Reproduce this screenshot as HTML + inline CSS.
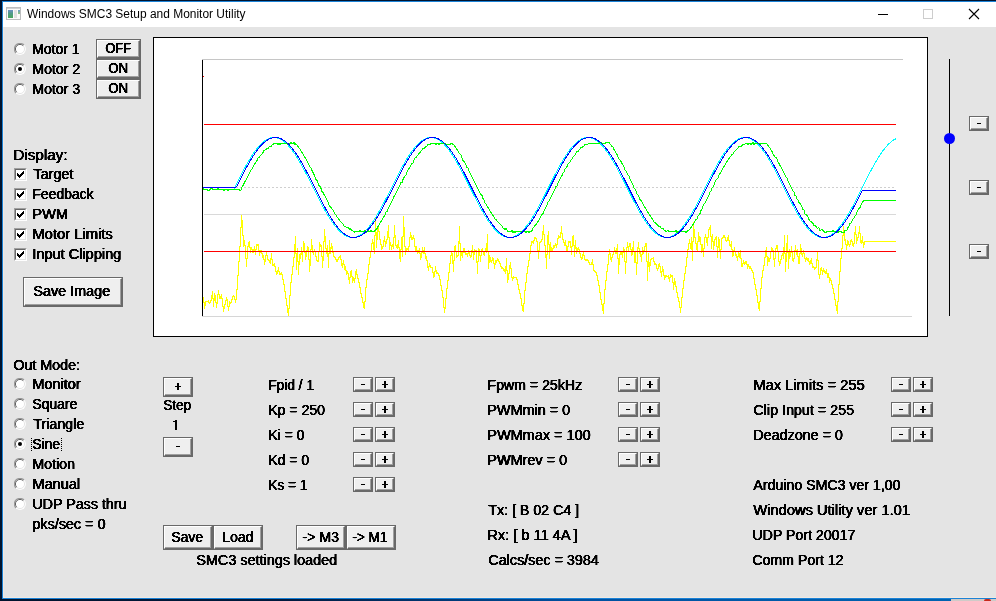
<!DOCTYPE html><html><head><meta charset="utf-8"><title>Windows SMC3 Setup and Monitor Utility</title><style>
html,body{margin:0;padding:0}
body{width:996px;height:601px;overflow:hidden;position:relative;background:#e4e4e4;font-family:'Liberation Sans', sans-serif;}
.a{position:absolute}
.t{position:absolute;white-space:pre;font:normal 14px/16px 'Liberation Sans', sans-serif;color:#000;transform-origin:0 0;text-shadow:0.75px 0 0 #000;filter:url(#th);}
.b{position:absolute;box-sizing:border-box;background:#efefef;border:1px solid #696969;}
.b:before{content:"";position:absolute;left:0;top:0;right:0;bottom:0;border-top:1px solid #fff;border-left:1px solid #fff;border-right:1px solid #696969;border-bottom:1px solid #696969;}
.b:after{content:"";position:absolute;left:1px;top:1px;right:1px;bottom:1px;border-right:1px solid #a0a0a0;border-bottom:1px solid #a0a0a0;}
.r{position:absolute;width:12px;height:12px;}
.c{position:absolute;width:13px;height:13px;box-sizing:border-box;background:#fff;border:1px solid;border-color:#a0a0a0 #fff #fff #a0a0a0;}
.c:before{content:"";position:absolute;left:0;top:0;right:0;bottom:0;border:1px solid;border-color:#696969 #e3e3e3 #e3e3e3 #696969;}
.m{position:absolute;background:#000;width:4px;height:1px}
.pv{position:absolute;background:#000;width:2px;height:7px}
.ph{position:absolute;background:#000;width:6px;height:1px}

</style></head><body>
<svg width="0" height="0" style="position:absolute"><filter id="th" x="-5%" y="-10%" width="110%" height="120%" color-interpolation-filters="sRGB"><feComponentTransfer><feFuncA type="linear" slope="2.4" intercept="-0.6"/></feComponentTransfer></filter></svg>
<div class="a" style="left:0;top:0;width:996px;height:27px;background:#fff"></div>
<div class="a" style="left:0;top:0;width:996px;height:1px;background:#00132e"></div>
<div class="a" style="left:0;top:1px;width:996px;height:1px;background:#1b82d6"></div>
<div class="a" style="left:3px;top:27px;width:1px;height:571px;background:#f0e9e2"></div>
<div class="a" style="left:3px;top:597px;width:993px;height:1px;background:#f0e9e2"></div>
<div class="a" style="left:0;top:0;width:2px;height:601px;background:#00132e"></div>
<div class="a" style="left:2px;top:1px;width:1px;height:598px;background:#1b82d6"></div>
<div class="a" style="left:2px;top:598px;width:994px;height:1px;background:#1b82d6"></div>
<div class="a" style="left:0;top:599px;width:951px;height:2px;background:linear-gradient(90deg,#00132e 0%,#001a3e 30%,#0050a0 60%,#0063b1 100%)"></div>
<div class="a" style="left:951px;top:599px;width:45px;height:2px;background:#cfcbc8"></div>
<div class="a" style="left:984px;top:599px;width:7px;height:2px;background:#c8281c;border-radius:3px 3px 0 0"></div>
<svg class="a" style="left:6px;top:7px" width="15" height="13" viewBox="0 0 15 13"><defs><linearGradient id="ig1" x1="0" y1="0" x2="0" y2="1"><stop offset="0" stop-color="#6c8fc4"/><stop offset=".45" stop-color="#4f9a86"/><stop offset="1" stop-color="#4aa85c"/></linearGradient><linearGradient id="ig2" x1="0" y1="0" x2="0" y2="1"><stop offset="0" stop-color="#6f9bd0"/><stop offset="1" stop-color="#8cc878"/></linearGradient></defs><rect x="0.5" y="0.5" width="14" height="12" fill="#fbfbfb" stroke="#bcbec0"/><rect x="1" y="1" width="13" height="1" fill="#cfd1d3"/><rect x="2" y="3" width="5" height="8" fill="url(#ig1)"/><rect x="8" y="3" width="3" height="8" fill="#e2e2e2"/><rect x="12" y="3" width="2" height="4" fill="url(#ig2)"/></svg>
<div class="a" style="left:878px;top:14px;width:10px;height:1px;background:#000"></div>
<div class="a" style="left:923px;top:9px;width:10px;height:10px;box-sizing:border-box;border:1px solid #cdcdcd"></div>
<svg class="a" style="left:968px;top:8px" width="12" height="12" viewBox="0 0 12 12"><path d="M1 1L11 11M11 1L1 11" stroke="#000" stroke-width="1.1" fill="none"/></svg>
<div class="b" style="left:96px;top:39px;width:45px;height:20px"></div>
<div class="b" style="left:96px;top:59px;width:45px;height:20px"></div>
<div class="b" style="left:96px;top:79px;width:45px;height:20px"></div>
<div class="b" style="left:23px;top:277px;width:100px;height:30px"></div>
<div class="b" style="left:163px;top:377px;width:30px;height:20px"></div>
<div class="b" style="left:163px;top:437px;width:30px;height:20px"></div>
<div class="b" style="left:163px;top:525px;width:50px;height:25px"></div>
<div class="b" style="left:213px;top:525px;width:50px;height:25px"></div>
<div class="b" style="left:296px;top:525px;width:50px;height:25px"></div>
<div class="b" style="left:346px;top:525px;width:50px;height:25px"></div>
<div class="b" style="left:353px;top:377px;width:20px;height:15px"></div>
<div class="m" style="left:361px;top:384px"></div>
<div class="b" style="left:375px;top:377px;width:20px;height:15px"></div>
<div class="pv" style="left:384px;top:381px"></div><div class="ph" style="left:382px;top:384px"></div>
<div class="b" style="left:353px;top:402px;width:20px;height:15px"></div>
<div class="m" style="left:361px;top:409px"></div>
<div class="b" style="left:375px;top:402px;width:20px;height:15px"></div>
<div class="pv" style="left:384px;top:406px"></div><div class="ph" style="left:382px;top:409px"></div>
<div class="b" style="left:353px;top:427px;width:20px;height:15px"></div>
<div class="m" style="left:361px;top:434px"></div>
<div class="b" style="left:375px;top:427px;width:20px;height:15px"></div>
<div class="pv" style="left:384px;top:431px"></div><div class="ph" style="left:382px;top:434px"></div>
<div class="b" style="left:353px;top:452px;width:20px;height:15px"></div>
<div class="m" style="left:361px;top:459px"></div>
<div class="b" style="left:375px;top:452px;width:20px;height:15px"></div>
<div class="pv" style="left:384px;top:456px"></div><div class="ph" style="left:382px;top:459px"></div>
<div class="b" style="left:353px;top:477px;width:20px;height:15px"></div>
<div class="m" style="left:361px;top:484px"></div>
<div class="b" style="left:375px;top:477px;width:20px;height:15px"></div>
<div class="pv" style="left:384px;top:481px"></div><div class="ph" style="left:382px;top:484px"></div>
<div class="b" style="left:618px;top:377px;width:20px;height:15px"></div>
<div class="m" style="left:626px;top:384px"></div>
<div class="b" style="left:640px;top:377px;width:20px;height:15px"></div>
<div class="pv" style="left:649px;top:381px"></div><div class="ph" style="left:647px;top:384px"></div>
<div class="b" style="left:618px;top:402px;width:20px;height:15px"></div>
<div class="m" style="left:626px;top:409px"></div>
<div class="b" style="left:640px;top:402px;width:20px;height:15px"></div>
<div class="pv" style="left:649px;top:406px"></div><div class="ph" style="left:647px;top:409px"></div>
<div class="b" style="left:618px;top:427px;width:20px;height:15px"></div>
<div class="m" style="left:626px;top:434px"></div>
<div class="b" style="left:640px;top:427px;width:20px;height:15px"></div>
<div class="pv" style="left:649px;top:431px"></div><div class="ph" style="left:647px;top:434px"></div>
<div class="b" style="left:618px;top:452px;width:20px;height:15px"></div>
<div class="m" style="left:626px;top:459px"></div>
<div class="b" style="left:640px;top:452px;width:20px;height:15px"></div>
<div class="pv" style="left:649px;top:456px"></div><div class="ph" style="left:647px;top:459px"></div>
<div class="b" style="left:891px;top:377px;width:20px;height:15px"></div>
<div class="m" style="left:899px;top:384px"></div>
<div class="b" style="left:913px;top:377px;width:20px;height:15px"></div>
<div class="pv" style="left:922px;top:381px"></div><div class="ph" style="left:920px;top:384px"></div>
<div class="b" style="left:891px;top:402px;width:20px;height:15px"></div>
<div class="m" style="left:899px;top:409px"></div>
<div class="b" style="left:913px;top:402px;width:20px;height:15px"></div>
<div class="pv" style="left:922px;top:406px"></div><div class="ph" style="left:920px;top:409px"></div>
<div class="b" style="left:891px;top:427px;width:20px;height:15px"></div>
<div class="m" style="left:899px;top:434px"></div>
<div class="b" style="left:913px;top:427px;width:20px;height:15px"></div>
<div class="pv" style="left:922px;top:431px"></div><div class="ph" style="left:920px;top:434px"></div>
<div class="b" style="left:969px;top:116px;width:20px;height:15px"></div>
<div class="m" style="left:977px;top:123px"></div>
<div class="b" style="left:969px;top:180px;width:20px;height:15px"></div>
<div class="m" style="left:977px;top:187px"></div>
<div class="b" style="left:969px;top:244px;width:20px;height:15px"></div>
<div class="m" style="left:977px;top:251px"></div>
<div class="pv" style="left:177px;top:383px"></div><div class="ph" style="left:175px;top:386px"></div>
<div class="m" style="left:176px;top:446px"></div>
<svg class="r" style="left:14px;top:43px" viewBox="0 0 12 12"><circle cx="6" cy="6" r="5.9" fill="#fff"/><path d="M2.0 10.0A5.4 5.4 0 0 1 10.0 2.0" stroke="#9a9a9a" stroke-width="1.1" fill="none"/><path d="M2.75 9.25A4.5 4.5 0 0 1 9.25 2.75" stroke="#636363" stroke-width="1" fill="none"/><path d="M9.25 2.75A4.5 4.5 0 0 1 2.75 9.25" stroke="#e6e6e6" stroke-width="1" fill="none"/></svg>
<svg class="r" style="left:14px;top:63px" viewBox="0 0 12 12"><circle cx="6" cy="6" r="5.9" fill="#fff"/><path d="M2.0 10.0A5.4 5.4 0 0 1 10.0 2.0" stroke="#9a9a9a" stroke-width="1.1" fill="none"/><path d="M2.75 9.25A4.5 4.5 0 0 1 9.25 2.75" stroke="#636363" stroke-width="1" fill="none"/><path d="M9.25 2.75A4.5 4.5 0 0 1 2.75 9.25" stroke="#e6e6e6" stroke-width="1" fill="none"/><circle cx="6" cy="6" r="2" fill="#000"/></svg>
<svg class="r" style="left:14px;top:83px" viewBox="0 0 12 12"><circle cx="6" cy="6" r="5.9" fill="#fff"/><path d="M2.0 10.0A5.4 5.4 0 0 1 10.0 2.0" stroke="#9a9a9a" stroke-width="1.1" fill="none"/><path d="M2.75 9.25A4.5 4.5 0 0 1 9.25 2.75" stroke="#636363" stroke-width="1" fill="none"/><path d="M9.25 2.75A4.5 4.5 0 0 1 2.75 9.25" stroke="#e6e6e6" stroke-width="1" fill="none"/></svg>
<svg class="r" style="left:14px;top:378px" viewBox="0 0 12 12"><circle cx="6" cy="6" r="5.9" fill="#fff"/><path d="M2.0 10.0A5.4 5.4 0 0 1 10.0 2.0" stroke="#9a9a9a" stroke-width="1.1" fill="none"/><path d="M2.75 9.25A4.5 4.5 0 0 1 9.25 2.75" stroke="#636363" stroke-width="1" fill="none"/><path d="M9.25 2.75A4.5 4.5 0 0 1 2.75 9.25" stroke="#e6e6e6" stroke-width="1" fill="none"/></svg>
<svg class="r" style="left:14px;top:398px" viewBox="0 0 12 12"><circle cx="6" cy="6" r="5.9" fill="#fff"/><path d="M2.0 10.0A5.4 5.4 0 0 1 10.0 2.0" stroke="#9a9a9a" stroke-width="1.1" fill="none"/><path d="M2.75 9.25A4.5 4.5 0 0 1 9.25 2.75" stroke="#636363" stroke-width="1" fill="none"/><path d="M9.25 2.75A4.5 4.5 0 0 1 2.75 9.25" stroke="#e6e6e6" stroke-width="1" fill="none"/></svg>
<svg class="r" style="left:14px;top:418px" viewBox="0 0 12 12"><circle cx="6" cy="6" r="5.9" fill="#fff"/><path d="M2.0 10.0A5.4 5.4 0 0 1 10.0 2.0" stroke="#9a9a9a" stroke-width="1.1" fill="none"/><path d="M2.75 9.25A4.5 4.5 0 0 1 9.25 2.75" stroke="#636363" stroke-width="1" fill="none"/><path d="M9.25 2.75A4.5 4.5 0 0 1 2.75 9.25" stroke="#e6e6e6" stroke-width="1" fill="none"/></svg>
<svg class="r" style="left:14px;top:438px" viewBox="0 0 12 12"><circle cx="6" cy="6" r="5.9" fill="#fff"/><path d="M2.0 10.0A5.4 5.4 0 0 1 10.0 2.0" stroke="#9a9a9a" stroke-width="1.1" fill="none"/><path d="M2.75 9.25A4.5 4.5 0 0 1 9.25 2.75" stroke="#636363" stroke-width="1" fill="none"/><path d="M9.25 2.75A4.5 4.5 0 0 1 2.75 9.25" stroke="#e6e6e6" stroke-width="1" fill="none"/><circle cx="6" cy="6" r="2" fill="#000"/></svg>
<svg class="r" style="left:14px;top:458px" viewBox="0 0 12 12"><circle cx="6" cy="6" r="5.9" fill="#fff"/><path d="M2.0 10.0A5.4 5.4 0 0 1 10.0 2.0" stroke="#9a9a9a" stroke-width="1.1" fill="none"/><path d="M2.75 9.25A4.5 4.5 0 0 1 9.25 2.75" stroke="#636363" stroke-width="1" fill="none"/><path d="M9.25 2.75A4.5 4.5 0 0 1 2.75 9.25" stroke="#e6e6e6" stroke-width="1" fill="none"/></svg>
<svg class="r" style="left:14px;top:478px" viewBox="0 0 12 12"><circle cx="6" cy="6" r="5.9" fill="#fff"/><path d="M2.0 10.0A5.4 5.4 0 0 1 10.0 2.0" stroke="#9a9a9a" stroke-width="1.1" fill="none"/><path d="M2.75 9.25A4.5 4.5 0 0 1 9.25 2.75" stroke="#636363" stroke-width="1" fill="none"/><path d="M9.25 2.75A4.5 4.5 0 0 1 2.75 9.25" stroke="#e6e6e6" stroke-width="1" fill="none"/></svg>
<svg class="r" style="left:14px;top:498px" viewBox="0 0 12 12"><circle cx="6" cy="6" r="5.9" fill="#fff"/><path d="M2.0 10.0A5.4 5.4 0 0 1 10.0 2.0" stroke="#9a9a9a" stroke-width="1.1" fill="none"/><path d="M2.75 9.25A4.5 4.5 0 0 1 9.25 2.75" stroke="#636363" stroke-width="1" fill="none"/><path d="M9.25 2.75A4.5 4.5 0 0 1 2.75 9.25" stroke="#e6e6e6" stroke-width="1" fill="none"/></svg>
<div class="c" style="left:14px;top:168px"></div>
<svg class="a" style="left:17px;top:171px" width="7" height="7" viewBox="0 0 7 7" shape-rendering="crispEdges"><path d="M0 2h1v3h-1zM1 3h1v3h-1zM2 4h1v3h-1zM3 3h1v3h-1zM4 2h1v3h-1zM5 1h1v3h-1zM6 0h1v3h-1z" fill="#000"/></svg>
<div class="c" style="left:14px;top:188px"></div>
<svg class="a" style="left:17px;top:191px" width="7" height="7" viewBox="0 0 7 7" shape-rendering="crispEdges"><path d="M0 2h1v3h-1zM1 3h1v3h-1zM2 4h1v3h-1zM3 3h1v3h-1zM4 2h1v3h-1zM5 1h1v3h-1zM6 0h1v3h-1z" fill="#000"/></svg>
<div class="c" style="left:14px;top:208px"></div>
<svg class="a" style="left:17px;top:211px" width="7" height="7" viewBox="0 0 7 7" shape-rendering="crispEdges"><path d="M0 2h1v3h-1zM1 3h1v3h-1zM2 4h1v3h-1zM3 3h1v3h-1zM4 2h1v3h-1zM5 1h1v3h-1zM6 0h1v3h-1z" fill="#000"/></svg>
<div class="c" style="left:14px;top:228px"></div>
<svg class="a" style="left:17px;top:231px" width="7" height="7" viewBox="0 0 7 7" shape-rendering="crispEdges"><path d="M0 2h1v3h-1zM1 3h1v3h-1zM2 4h1v3h-1zM3 3h1v3h-1zM4 2h1v3h-1zM5 1h1v3h-1zM6 0h1v3h-1z" fill="#000"/></svg>
<div class="c" style="left:14px;top:248px"></div>
<svg class="a" style="left:17px;top:251px" width="7" height="7" viewBox="0 0 7 7" shape-rendering="crispEdges"><path d="M0 2h1v3h-1zM1 3h1v3h-1zM2 4h1v3h-1zM3 3h1v3h-1zM4 2h1v3h-1zM5 1h1v3h-1zM6 0h1v3h-1z" fill="#000"/></svg>
<div class="a" style="left:31px;top:438px;width:1px;height:13px;background:repeating-linear-gradient(180deg,#000 0 1px,transparent 1px 2px)"></div><div class="a" style="left:61px;top:438px;width:1px;height:13px;background:repeating-linear-gradient(180deg,#000 0 1px,transparent 1px 2px)"></div>
<span class="t" style="left:31.81px;top:41px;transform:scaleX(0.9925)">Motor 1</span>
<span class="t" style="left:31.79px;top:61px;transform:scaleX(1.0053)">Motor 2</span>
<span class="t" style="left:31.79px;top:81px;transform:scaleX(1.0053)">Motor 3</span>
<span class="t" style="left:12.61px;top:147px;transform:scaleX(1.0872)">Display:</span>
<span class="t" style="left:33.40px;top:166px;transform:scaleX(1.0264)">Target</span>
<span class="t" style="left:32.40px;top:186px;transform:scaleX(0.9976)">Feedback</span>
<span class="t" style="left:32.36px;top:206px;transform:scaleX(1.0412)">PWM</span>
<span class="t" style="left:32.35px;top:226px;transform:scaleX(1.0548)">Motor Limits</span>
<span class="t" style="left:32.36px;top:246px;transform:scaleX(1.0383)">Input Clipping</span>
<span class="t" style="left:12.66px;top:357px;transform:scaleX(1.0185)">Out Mode:</span>
<span class="t" style="left:31.77px;top:376px;transform:scaleX(1.0332)">Monitor</span>
<span class="t" style="left:31.80px;top:396px;transform:scaleX(0.9966)">Square</span>
<span class="t" style="left:32.80px;top:416px;transform:scaleX(1.0148)">Triangle</span>
<span class="t" style="left:31.81px;top:436px;transform:scaleX(0.9874)">Sine</span>
<span class="t" style="left:31.78px;top:456px;transform:scaleX(1.0156)">Motion</span>
<span class="t" style="left:31.76px;top:476px;transform:scaleX(1.0413)">Manual</span>
<span class="t" style="left:31.78px;top:496px;transform:scaleX(1.0202)">UDP Pass thru</span>
<span class="t" style="left:32.37px;top:516px;transform:scaleX(1.0277)">pks/sec = 0</span>
<span class="t" style="left:162.84px;top:397px;transform:scaleX(0.9615)">Step</span>
<div class="a" style="left:175px;top:420px;width:2px;height:10px;background:#000"></div><div class="a" style="left:173px;top:421px;width:2px;height:1px;background:#000"></div>
<span class="t" style="left:267.52px;top:377px;transform:scaleX(0.9754)">Fpid / 1</span>
<span class="t" style="left:267.50px;top:402px;transform:scaleX(1.0027)">Kp = 250</span>
<span class="t" style="left:267.50px;top:427px;transform:scaleX(0.9986)">Ki = 0</span>
<span class="t" style="left:267.50px;top:452px;transform:scaleX(0.9967)">Kd = 0</span>
<span class="t" style="left:267.53px;top:477px;transform:scaleX(0.9736)">Ks = 1</span>
<span class="t" style="left:195.77px;top:552px;transform:scaleX(1.0282)">SMC3 settings loaded</span>
<span class="t" style="left:487.39px;top:377px;transform:scaleX(1.0113)">Fpwm = 25kHz</span>
<span class="t" style="left:487.37px;top:402px;transform:scaleX(1.0282)">PWMmin = 0</span>
<span class="t" style="left:487.37px;top:427px;transform:scaleX(1.0327)">PWMmax = 100</span>
<span class="t" style="left:487.37px;top:452px;transform:scaleX(1.0306)">PWMrev = 0</span>
<span class="t" style="left:488.40px;top:502px;transform:scaleX(1.0140)">Tx: [ B 02 C4 ]</span>
<span class="t" style="left:487.36px;top:527px;transform:scaleX(1.0402)">Rx: [ b 11 4A ]</span>
<span class="t" style="left:488.40px;top:552px;transform:scaleX(1.0245)">Calcs/sec = 3984</span>
<span class="t" style="left:752.65px;top:377px;transform:scaleX(1.0478)">Max Limits = 255</span>
<span class="t" style="left:752.66px;top:402px;transform:scaleX(1.0229)">Clip Input = 255</span>
<span class="t" style="left:752.68px;top:427px;transform:scaleX(1.0225)">Deadzone = 0</span>
<span class="t" style="left:753.30px;top:477px;transform:scaleX(1.0106)">Arduino SMC3 ver 1,00</span>
<span class="t" style="left:753.30px;top:502px;transform:scaleX(1.0484)">Windows Utility ver 1.01</span>
<span class="t" style="left:752.29px;top:527px;transform:scaleX(1.0124)">UDP Port 20017</span>
<span class="t" style="left:752.18px;top:552px;transform:scaleX(1.0096)">Comm Port 12</span>
<span class="t" style="left:104.84px;top:40px;transform:scaleX(0.9203)">OFF</span>
<span class="t" style="left:108.20px;top:60px;transform:scaleX(0.9363)">ON</span>
<span class="t" style="left:108.20px;top:80px;transform:scaleX(0.9363)">ON</span>
<span class="t" style="left:33.47px;top:283px;transform:scaleX(1.0290)">Save Image</span>
<span class="t" style="left:170.70px;top:529px;transform:scaleX(0.9953)">Save</span>
<span class="t" style="left:221.60px;top:529px;transform:scaleX(0.9951)">Load</span>
<span class="t" style="left:301.80px;top:529px;transform:scaleX(1.0103)">-&gt; M3</span>
<span class="t" style="left:351.80px;top:529px;transform:scaleX(0.9669)">-&gt; M1</span>
<span class="a" style="left:27.40px;top:7.3px;white-space:pre;font:normal 12px/14px 'Liberation Sans', sans-serif;color:#000;transform-origin:0 0;transform:scaleX(0.9962)">Windows SMC3 Setup and Monitor Utility</span>
<div class="a" style="left:949px;top:59px;width:1px;height:257px;background:#000"></div>
<div class="a" style="left:943.75px;top:132.75px;width:11.5px;height:11.5px;border-radius:50%;background:#0000ff"></div>
<svg class="a" style="left:153px;top:37px" width="775" height="300" viewBox="153 37 775 300"><rect x="153.5" y="37.5" width="774" height="299" fill="#fff" stroke="#000" stroke-width="1"/><g shape-rendering="crispEdges" fill="none" stroke-width="1"><path d="M202 59.5H903" stroke="#c6c6c6"/><path d="M202 316.5H912" stroke="#d6d6d6"/><path d="M204 214.5H896" stroke="#d9d9d9"/><path d="M204 187.5H896" stroke="#cfcfcf" stroke-dasharray="2 2"/><path d="M202.5 60V316" stroke="#000"/><path d="M203 76.5H204M203 299.5H204" stroke="#f00"/></g><path shape-rendering="crispEdges" fill="none" stroke="#ffff00" stroke-width="1" d="M203.5 297V303M204.5 302V309M205.5 301V306M206.5 301V302M207.5 301V302M208.5 300V303M209.5 302V304M210.5 300V303M211.5 295V301M212.5 291V299M213.5 298V307M214.5 293V301M215.5 295V303M216.5 302V308M217.5 294V304M218.5 290V295M219.5 294V299M220.5 296V299M221.5 294V299M222.5 298V307M223.5 306V312M224.5 304V309M225.5 300V305M226.5 297V301M227.5 299V307M228.5 306V311M229.5 301V307M230.5 302V304M231.5 299V303M232.5 296V300M233.5 295V297M234.5 296V300M235.5 299V303M236.5 289V300M237.5 275V290M238.5 261V276M239.5 246V262M240.5 227V247M241.5 215V228M242.5 220V236M243.5 235V247M244.5 240V246M245.5 245V259M246.5 258V267M247.5 246V259M248.5 242V247M249.5 241V248M250.5 247V253M251.5 247V250M252.5 249V253M253.5 249V253M254.5 246V251M255.5 249V255M256.5 244V250M257.5 244V246M258.5 244V251M259.5 250V256M260.5 250V253M261.5 250V254M262.5 253V258M263.5 255V260M264.5 259V265M265.5 255V262M266.5 252V256M267.5 255V260M268.5 259V261M269.5 260V263M270.5 258V264M271.5 253V260M272.5 259V266M273.5 264V266M274.5 263V267M275.5 266V272M276.5 271V275M277.5 270V274M278.5 267V272M279.5 271V275M280.5 273V275M281.5 272V275M282.5 274V280M283.5 279V285M284.5 284V292M285.5 291V299M286.5 298V306M287.5 305V313M288.5 308V316M289.5 295V309M290.5 282V296M291.5 274V283M292.5 266V275M293.5 257V267M294.5 244V258M295.5 236V254M296.5 253V270M297.5 248V262M298.5 261V275M299.5 254V265M300.5 253V259M301.5 247V255M302.5 251V262M303.5 241V252M304.5 243V253M305.5 252V260M306.5 250V257M307.5 246V251M308.5 247V260M309.5 259V272M310.5 249V266M311.5 239V250M312.5 245V253M313.5 251V255M314.5 249V252M315.5 251V257M316.5 256V261M317.5 260V262M318.5 251V262M319.5 242V252M320.5 244V247M321.5 245V257M322.5 256V268M323.5 241V261M324.5 229V242M325.5 236V249M326.5 248V254M327.5 245V257M328.5 253V268M329.5 240V254M330.5 247V254M331.5 243V249M332.5 246V253M333.5 252V257M334.5 256V258M335.5 257V260M336.5 259V262M337.5 259V262M338.5 257V260M339.5 256V258M340.5 255V260M341.5 259V266M342.5 263V268M343.5 260V265M344.5 264V270M345.5 266V271M346.5 270V275M347.5 271V274M348.5 273V280M349.5 277V284M350.5 271V278M351.5 270V277M352.5 276V283M353.5 277V281M354.5 278V283M355.5 271V279M356.5 269V275M357.5 274V279M358.5 278V283M359.5 282V288M360.5 287V294M361.5 293V298M362.5 297V303M363.5 302V308M364.5 301V309M365.5 287V302M366.5 279V288M367.5 273V280M368.5 264V274M369.5 257V265M370.5 251V258M371.5 243V252M372.5 239V244M373.5 242V250M374.5 235V254M375.5 217V236M376.5 232V248M377.5 228V240M378.5 225V232M379.5 231V240M380.5 239V245M381.5 244V250M382.5 246V249M383.5 240V247M384.5 236V242M385.5 241V247M386.5 239V244M387.5 231V240M388.5 225V238M389.5 237V250M390.5 242V246M391.5 245V250M392.5 244V247M393.5 237V249M394.5 225V238M395.5 235V246M396.5 245V248M397.5 244V249M398.5 240V248M399.5 247V259M400.5 249V262M401.5 237V250M402.5 236V257M403.5 216V237M404.5 227V247M405.5 246V255M406.5 248V252M407.5 248V250M408.5 246V252M409.5 237V247M410.5 232V238M411.5 235V240M412.5 237V240M413.5 235V239M414.5 238V247M415.5 246V252M416.5 246V251M417.5 250V254M418.5 250V253M419.5 248V254M420.5 253V260M421.5 252V258M422.5 247V253M423.5 250V254M424.5 247V254M425.5 253V259M426.5 256V261M427.5 260V268M428.5 266V271M429.5 263V267M430.5 265V268M431.5 267V268M432.5 267V273M433.5 272V278M434.5 271V277M435.5 266V272M436.5 270V274M437.5 272V274M438.5 273V276M439.5 275V280M440.5 279V286M441.5 285V291M442.5 290V298M443.5 297V308M444.5 307V313M445.5 298V309M446.5 288V299M447.5 280V289M448.5 272V281M449.5 263V273M450.5 255V264M451.5 251V256M452.5 253V264M453.5 260V272M454.5 246V261M455.5 245V252M456.5 251V258M457.5 255V257M458.5 241V256M459.5 226V244M460.5 243V261M461.5 251V256M462.5 252V258M463.5 248V253M464.5 248V253M465.5 252V255M466.5 253V255M467.5 253V257M468.5 250V254M469.5 252V256M470.5 255V258M471.5 250V257M472.5 245V253M473.5 252V260M474.5 249V255M475.5 250V251M476.5 250V263M477.5 261V274M478.5 248V262M479.5 249V256M480.5 255V262M481.5 249V256M482.5 248V252M483.5 251V255M484.5 251V256M485.5 248V252M486.5 243V253M487.5 234V252M488.5 251V269M489.5 255V263M490.5 257V262M491.5 260V263M492.5 257V261M493.5 258V264M494.5 263V269M495.5 260V265M496.5 260V263M497.5 258V261M498.5 259V262M499.5 261V264M500.5 263V267M501.5 266V269M502.5 267V269M503.5 268V271M504.5 269V272M505.5 266V274M506.5 258V271M507.5 270V283M508.5 273V280M509.5 265V274M510.5 262V269M511.5 268V278M512.5 277V281M513.5 276V279M514.5 277V278M515.5 277V278M516.5 277V280M517.5 279V285M518.5 284V290M519.5 289V294M520.5 293V299M521.5 298V306M522.5 305V311M523.5 303V312M524.5 290V304M525.5 282V291M526.5 273V283M527.5 266V274M528.5 260V267M529.5 253V261M530.5 245V254M531.5 241V246M532.5 241V243M533.5 240V244M534.5 237V241M535.5 237V239M536.5 238V242M537.5 241V252M538.5 250V259M539.5 242V251M540.5 241V243M541.5 239V242M542.5 231V240M543.5 225V235M544.5 234V246M545.5 245V258M546.5 254V269M547.5 235V255M548.5 231V245M549.5 244V259M550.5 242V251M551.5 247V252M552.5 248V252M553.5 245V249M554.5 245V248M555.5 243V246M556.5 244V248M557.5 238V245M558.5 235V239M559.5 236V238M560.5 232V238M561.5 226V234M562.5 233V240M563.5 239V243M564.5 242V246M565.5 240V246M566.5 245V251M567.5 246V251M568.5 241V247M569.5 241V243M570.5 241V248M571.5 246V255M572.5 236V247M573.5 235V246M574.5 245V257M575.5 240V249M576.5 247V254M577.5 248V252M578.5 247V250M579.5 249V254M580.5 253V258M581.5 257V260M582.5 254V259M583.5 252V256M584.5 255V260M585.5 259V261M586.5 259V261M587.5 259V261M588.5 260V263M589.5 262V265M590.5 264V265M591.5 262V265M592.5 259V265M593.5 264V271M594.5 270V272M595.5 271V273M596.5 272V276M597.5 275V281M598.5 280V286M599.5 285V293M600.5 292V300M601.5 299V305M602.5 304V311M603.5 303V314M604.5 289V304M605.5 280V290M606.5 271V281M607.5 264V272M608.5 254V265M609.5 249V255M610.5 253V260M611.5 257V262M612.5 254V258M613.5 251V255M614.5 247V252M615.5 250V254M616.5 248V254M617.5 244V259M618.5 258V274M619.5 254V265M620.5 252V255M621.5 251V255M622.5 252V258M623.5 247V253M624.5 249V262M625.5 261V274M626.5 247V263M627.5 242V248M628.5 246V251M629.5 243V247M630.5 243V250M631.5 249V256M632.5 247V255M633.5 241V252M634.5 251V263M635.5 251V263M636.5 262V275M637.5 247V264M638.5 242V249M639.5 248V254M640.5 251V257M641.5 254V262M642.5 247V255M643.5 250V254M644.5 246V252M645.5 243V247M646.5 243V262M647.5 261V281M648.5 253V267M649.5 262V272M650.5 259V266M651.5 258V260M652.5 258V259M653.5 257V262M654.5 261V265M655.5 263V265M656.5 264V269M657.5 268V271M658.5 264V269M659.5 263V267M660.5 266V273M661.5 271V277M662.5 266V272M663.5 269V276M664.5 275V280M665.5 275V278M666.5 275V277M667.5 276V277M668.5 275V279M669.5 277V282M670.5 274V278M671.5 275V277M672.5 275V283M673.5 282V290M674.5 278V285M675.5 281V287M676.5 286V293M677.5 292V298M678.5 297V302M679.5 301V308M680.5 307V313M681.5 297V308M682.5 288V298M683.5 280V289M684.5 273V281M685.5 266V274M686.5 257V267M687.5 249V258M688.5 243V250M689.5 239V244M690.5 243V249M691.5 237V250M692.5 241V261M693.5 222V242M694.5 229V238M695.5 237V244M696.5 243V250M697.5 241V251M698.5 232V242M699.5 236V242M700.5 237V245M701.5 244V253M702.5 244V251M703.5 248V257M704.5 237V249M705.5 234V238M706.5 237V243M707.5 237V246M708.5 229V238M709.5 227V230M710.5 225V237M711.5 236V249M712.5 234V242M713.5 241V250M714.5 239V246M715.5 237V240M716.5 236V247M717.5 246V258M718.5 237V248M719.5 239V251M720.5 249V259M721.5 238V250M722.5 237V239M723.5 235V238M724.5 235V238M725.5 237V241M726.5 240V242M727.5 237V241M728.5 235V241M729.5 240V246M730.5 244V247M731.5 241V250M732.5 249V257M733.5 250V256M734.5 247V252M735.5 251V256M736.5 254V258M737.5 256V261M738.5 252V257M739.5 253V258M740.5 250V259M741.5 258V267M742.5 263V267M743.5 260V264M744.5 262V265M745.5 261V264M746.5 261V265M747.5 264V269M748.5 264V267M749.5 266V269M750.5 266V269M751.5 268V271M752.5 270V273M753.5 272V279M754.5 278V285M755.5 284V290M756.5 289V296M757.5 295V303M758.5 302V309M759.5 301V311M760.5 288V302M761.5 277V289M762.5 270V278M763.5 265V271M764.5 257V266M765.5 250V258M766.5 247V257M767.5 256V266M768.5 257V262M769.5 258V262M770.5 251V259M771.5 247V252M772.5 248V251M773.5 250V260M774.5 258V267M775.5 248V259M776.5 245V249M777.5 245V252M778.5 251V262M779.5 261V266M780.5 259V264M781.5 255V260M782.5 253V256M783.5 247V259M784.5 235V254M785.5 253V272M786.5 243V262M787.5 235V253M788.5 252V269M789.5 249V259M790.5 251V257M791.5 246V253M792.5 252V261M793.5 258V262M794.5 250V259M795.5 245V251M796.5 250V255M797.5 249V257M798.5 256V264M799.5 253V264M800.5 244V254M801.5 248V255M802.5 253V257M803.5 250V254M804.5 253V259M805.5 258V262M806.5 257V260M807.5 258V261M808.5 258V262M809.5 261V265M810.5 260V264M811.5 258V264M812.5 263V268M813.5 266V268M814.5 267V270M815.5 267V269M816.5 259V268M817.5 252V261M818.5 260V275M819.5 274V279M820.5 268V275M821.5 267V271M822.5 270V275M823.5 268V272M824.5 270V273M825.5 271V274M826.5 269V274M827.5 273V278M828.5 273V278M829.5 277V283M830.5 278V281M831.5 280V285M832.5 284V289M833.5 288V294M834.5 293V300M835.5 299V306M836.5 305V311M837.5 301V314M838.5 284V302M839.5 271V285M840.5 258V272M841.5 248V259M842.5 235V249M843.5 226V236M844.5 233V241M845.5 239V245M846.5 244V250M847.5 240V246M848.5 241V245M849.5 244V247M850.5 240V245M851.5 239V242M852.5 241V246M853.5 243V247M854.5 232V244M855.5 226V235M856.5 234V244M857.5 237V241M858.5 232V238M859.5 226V234M860.5 233V243M861.5 240V244M862.5 236V243M863.5 242V248M864.5 241V245M865.5 241V242M866.5 241V242M867.5 241V242M868.5 241V242M869.5 241V242M870.5 241V242M871.5 241V242M872.5 241V242M873.5 241V242M874.5 241V242M875.5 241V242M876.5 241V242M877.5 241V242M878.5 241V242M879.5 241V242M880.5 241V242M881.5 241V242M882.5 241V242M883.5 241V242M884.5 241V242M885.5 241V242M886.5 241V242M887.5 241V242M888.5 241V242M889.5 241V242M890.5 241V242M891.5 241V242M892.5 241V242M893.5 241V242M894.5 241V242M895.5 241V242"/><path shape-rendering="crispEdges" d="M204 124.5H896M204 251.5H896" stroke="#f00" stroke-width="1" fill="none"/><polyline shape-rendering="crispEdges" fill="none" stroke="#00ffff" stroke-width="1" points="234.2,188.5 235.2,186.5 236.2,184.5 237.2,182.5 238.2,180.5 239.2,178.5 240.2,176.6 241.2,174.6 242.2,172.7 243.2,170.8 244.2,168.9 245.2,167.1 246.2,165.3 247.2,163.5 248.2,161.8 249.2,160.1 250.2,158.4 251.2,156.8 252.2,155.3 253.2,153.8 254.2,152.3 255.2,150.9 256.2,149.6 257.2,148.3 258.2,147.1 259.2,145.9 260.2,144.9 261.2,143.9 262.2,142.9 263.2,142.0 264.2,141.2 265.2,140.5 266.2,139.9 267.2,139.3 268.2,138.8 269.2,138.4 270.2,138.1 271.2,137.8 272.2,137.6 273.2,137.5 274.2,137.5 275.2,137.6 276.2,137.7 277.2,137.9 278.2,138.2 279.2,138.6 280.2,139.1 281.2,139.6 282.2,140.2 283.2,140.9 284.2,141.7 285.2,142.5 286.2,143.4 287.2,144.4 288.2,145.4 289.2,146.6 290.2,147.7 291.2,149.0 292.2,150.3 293.2,151.7 294.2,153.1 295.2,154.6 296.2,156.1 297.2,157.7 298.2,159.3 299.2,161.0 300.2,162.7 301.2,164.5 302.2,166.3 303.2,168.1 304.2,170.0 305.2,171.8 306.2,173.8 307.2,175.7 308.2,177.7 309.2,179.6 310.2,181.6 311.2,183.6 312.2,185.6 313.2,187.6 314.2,189.6 315.2,191.6 316.2,193.6 317.2,195.6 318.2,197.5 319.2,199.5 320.2,201.4 321.2,203.3 322.2,205.2 323.2,207.1 324.2,208.9 325.2,210.7 326.2,212.5 327.2,214.2 328.2,215.8 329.2,217.5 330.2,219.0 331.2,220.6 332.2,222.1 333.2,223.5 334.2,224.8 335.2,226.1 336.2,227.4 337.2,228.5 338.2,229.7 339.2,230.7 340.2,231.7 341.2,232.6 342.2,233.4 343.2,234.2 344.2,234.8 345.2,235.5 346.2,236.0 347.2,236.4 348.2,236.8 349.2,237.1 350.2,237.3 351.2,237.4 352.2,237.5 353.2,237.5 354.2,237.4 355.2,237.2 356.2,236.9 357.2,236.6 358.2,236.1 359.2,235.6 360.2,235.1 361.2,234.4 362.2,233.7 363.2,232.9 364.2,232.0 365.2,231.0 366.2,230.0 367.2,228.9 368.2,227.8 369.2,226.6 370.2,225.3 371.2,224.0 372.2,222.6 373.2,221.1 374.2,219.6 375.2,218.0 376.2,216.4 377.2,214.8 378.2,213.1 379.2,211.3 380.2,209.5 381.2,207.7 382.2,205.9 383.2,204.0 384.2,202.1 385.2,200.2 386.2,198.2 387.2,196.3 388.2,194.3 389.2,192.3 390.2,190.3 391.2,188.3 392.2,186.3 393.2,184.3 394.2,182.3 395.2,180.3 396.2,178.3 397.2,176.4 398.2,174.4 399.2,172.5 400.2,170.6 401.2,168.7 402.2,166.9 403.2,165.1 404.2,163.3 405.2,161.6 406.2,159.9 407.2,158.3 408.2,156.7 409.2,155.1 410.2,153.6 411.2,152.2 412.2,150.8 413.2,149.4 414.2,148.2 415.2,147.0 416.2,145.8 417.2,144.8 418.2,143.8 419.2,142.8 420.2,142.0 421.2,141.2 422.2,140.5 423.2,139.8 424.2,139.2 425.2,138.8 426.2,138.4 427.2,138.0 428.2,137.8 429.2,137.6 430.2,137.5 431.2,137.5 432.2,137.6 433.2,137.7 434.2,138.0 435.2,138.3 436.2,138.7 437.2,139.1 438.2,139.7 439.2,140.3 440.2,141.0 441.2,141.8 442.2,142.6 443.2,143.5 444.2,144.5 445.2,145.6 446.2,146.7 447.2,147.9 448.2,149.1 449.2,150.4 450.2,151.8 451.2,153.2 452.2,154.7 453.2,156.3 454.2,157.9 455.2,159.5 456.2,161.2 457.2,162.9 458.2,164.7 459.2,166.5 460.2,168.3 461.2,170.1 462.2,172.0 463.2,174.0 464.2,175.9 465.2,177.8 466.2,179.8 467.2,181.8 468.2,183.8 469.2,185.8 470.2,187.8 471.2,189.8 472.2,191.8 473.2,193.8 474.2,195.8 475.2,197.7 476.2,199.7 477.2,201.6 478.2,203.5 479.2,205.4 480.2,207.3 481.2,209.1 482.2,210.9 483.2,212.6 484.2,214.3 485.2,216.0 486.2,217.6 487.2,219.2 488.2,220.7 489.2,222.2 490.2,223.6 491.2,225.0 492.2,226.3 493.2,227.5 494.2,228.7 495.2,229.8 496.2,230.8 497.2,231.8 498.2,232.7 499.2,233.5 500.2,234.2 501.2,234.9 502.2,235.5 503.2,236.0 504.2,236.5 505.2,236.8 506.2,237.1 507.2,237.3 508.2,237.5 509.2,237.5 510.2,237.5 511.2,237.4 512.2,237.2 513.2,236.9 514.2,236.5 515.2,236.1 516.2,235.6 517.2,235.0 518.2,234.3 519.2,233.6 520.2,232.8 521.2,231.9 522.2,231.0 523.2,229.9 524.2,228.8 525.2,227.7 526.2,226.4 527.2,225.2 528.2,223.8 529.2,222.4 530.2,220.9 531.2,219.4 532.2,217.9 533.2,216.3 534.2,214.6 535.2,212.9 536.2,211.1 537.2,209.4 538.2,207.5 539.2,205.7 540.2,203.8 541.2,201.9 542.2,200.0 543.2,198.0 544.2,196.1 545.2,194.1 546.2,192.1 547.2,190.1 548.2,188.1 549.2,186.1 550.2,184.1 551.2,182.1 552.2,180.1 553.2,178.1 554.2,176.2 555.2,174.2 556.2,172.3 557.2,170.4 558.2,168.6 559.2,166.7 560.2,164.9 561.2,163.2 562.2,161.4 563.2,159.7 564.2,158.1 565.2,156.5 566.2,155.0 567.2,153.5 568.2,152.0 569.2,150.6 570.2,149.3 571.2,148.1 572.2,146.9 573.2,145.7 574.2,144.7 575.2,143.7 576.2,142.7 577.2,141.9 578.2,141.1 579.2,140.4 580.2,139.8 581.2,139.2 582.2,138.7 583.2,138.3 584.2,138.0 585.2,137.8 586.2,137.6 587.2,137.5 588.2,137.5 589.2,137.6 590.2,137.7 591.2,138.0 592.2,138.3 593.2,138.7 594.2,139.2 595.2,139.7 596.2,140.4 597.2,141.1 598.2,141.8 599.2,142.7 600.2,143.6 601.2,144.6 602.2,145.7 603.2,146.8 604.2,148.0 605.2,149.3 606.2,150.6 607.2,152.0 608.2,153.4 609.2,154.9 610.2,156.4 611.2,158.0 612.2,159.7 613.2,161.3 614.2,163.1 615.2,164.8 616.2,166.6 617.2,168.5 618.2,170.3 619.2,172.2 620.2,174.1 621.2,176.1 622.2,178.0 623.2,180.0 624.2,182.0 625.2,184.0 626.2,186.0 627.2,188.0 628.2,190.0 629.2,192.0 630.2,194.0 631.2,196.0 632.2,197.9 633.2,199.9 634.2,201.8 635.2,203.7 636.2,205.6 637.2,207.5 638.2,209.3 639.2,211.1 640.2,212.8 641.2,214.5 642.2,216.2 643.2,217.8 644.2,219.4 645.2,220.9 646.2,222.3 647.2,223.7 648.2,225.1 649.2,226.4 650.2,227.6 651.2,228.8 652.2,229.9 653.2,230.9 654.2,231.9 655.2,232.7 656.2,233.6 657.2,234.3 658.2,235.0 659.2,235.6 660.2,236.1 661.2,236.5 662.2,236.9 663.2,237.1 664.2,237.3 665.2,237.5 666.2,237.5 667.2,237.5 668.2,237.3 669.2,237.1 670.2,236.9 671.2,236.5 672.2,236.1 673.2,235.5 674.2,234.9 675.2,234.3 676.2,233.5 677.2,232.7 678.2,231.8 679.2,230.9 680.2,229.8 681.2,228.7 682.2,227.6 683.2,226.3 684.2,225.0 685.2,223.7 686.2,222.3 687.2,220.8 688.2,219.3 689.2,217.7 690.2,216.1 691.2,214.4 692.2,212.7 693.2,211.0 694.2,209.2 695.2,207.4 696.2,205.5 697.2,203.6 698.2,201.7 699.2,199.8 700.2,197.8 701.2,195.9 702.2,193.9 703.2,191.9 704.2,189.9 705.2,187.9 706.2,185.9 707.2,183.9 708.2,181.9 709.2,179.9 710.2,177.9 711.2,176.0 712.2,174.1 713.2,172.1 714.2,170.2 715.2,168.4 716.2,166.5 717.2,164.7 718.2,163.0 719.2,161.3 720.2,159.6 721.2,157.9 722.2,156.3 723.2,154.8 724.2,153.3 725.2,151.9 726.2,150.5 727.2,149.2 728.2,147.9 729.2,146.7 730.2,145.6 731.2,144.6 732.2,143.6 733.2,142.6 734.2,141.8 735.2,141.0 736.2,140.3 737.2,139.7 738.2,139.1 739.2,138.7 740.2,138.3 741.2,138.0 742.2,137.7 743.2,137.6 744.2,137.5 745.2,137.5 746.2,137.6 747.2,137.8 748.2,138.0 749.2,138.3 750.2,138.7 751.2,139.2 752.2,139.8 753.2,140.4 754.2,141.1 755.2,141.9 756.2,142.8 757.2,143.7 758.2,144.7 759.2,145.8 760.2,146.9 761.2,148.1 762.2,149.4 763.2,150.7 764.2,152.1 765.2,153.5 766.2,155.0 767.2,156.6 768.2,158.2 769.2,159.8 770.2,161.5 771.2,163.2 772.2,165.0 773.2,166.8 774.2,168.7 775.2,170.5 776.2,172.4 777.2,174.3 778.2,176.3 779.2,178.2 780.2,180.2 781.2,182.2 782.2,184.2 783.2,186.2 784.2,188.2 785.2,190.2 786.2,192.2 787.2,194.2 788.2,196.2 789.2,198.1 790.2,200.1 791.2,202.0 792.2,203.9 793.2,205.8 794.2,207.6 795.2,209.5 796.2,211.2 797.2,213.0 798.2,214.7 799.2,216.3 800.2,217.9 801.2,219.5 802.2,221.0 803.2,222.5 804.2,223.9 805.2,225.2 806.2,226.5 807.2,227.7 808.2,228.9 809.2,230.0 810.2,231.0 811.2,232.0 812.2,232.8 813.2,233.6 814.2,234.4 815.2,235.0 816.2,235.6 817.2,236.1 818.2,236.6 819.2,236.9 820.2,237.2 821.2,237.4 822.2,237.5 823.2,237.5 824.2,237.4 825.2,237.3 826.2,237.1 827.2,236.8 828.2,236.5 829.2,236.0 830.2,235.5 831.2,234.9 832.2,234.2 833.2,233.4 834.2,232.6 835.2,231.7 836.2,230.8 837.2,229.7 838.2,228.6 839.2,227.4 840.2,226.2 841.2,224.9 842.2,223.5 843.2,222.1 844.2,220.7 845.2,219.1 846.2,217.5 847.2,215.9 848.2,214.3 849.2,212.5 850.2,210.8 851.2,209.0 852.2,207.2 853.2,205.3 854.2,203.4 855.2,201.5 856.2,199.6 857.2,197.6 858.2,195.7 859.2,193.7 860.2,191.7 861.2,189.7 862.2,187.7 863.2,185.7 864.2,183.7 865.2,181.7 866.2,179.7 867.2,177.8 868.2,175.8 869.2,173.9 870.2,171.9 871.2,170.1 872.2,168.2 873.2,166.4 874.2,164.6 875.2,162.8 876.2,161.1 877.2,159.4 878.2,157.8 879.2,156.2 880.2,154.7 881.2,153.2 882.2,151.7 883.2,150.4 884.2,149.1 885.2,147.8 886.2,146.6 887.2,145.5 888.2,144.5 889.2,143.5 890.2,142.6 891.2,141.7 892.2,140.9 893.2,140.3 894.2,139.6 896.0,138.7"/><polyline shape-rendering="crispEdges" fill="none" stroke="#00ff00" stroke-width="1" points="203,188.4 204,189.4 205,189.4 206,189.4 207,189.4 208,190.4 209,190.4 210,189.4 211,188.4 212,188.4 213,189.4 214,189.4 215,189.4 216,189.4 217,189.4 218,188.4 219,189.4 220,189.4 221,189.4 222,189.4 223,189.4 224,190.4 225,189.4 226,189.4 227,189.4 228,190.4 229,189.4 230,189.4 231,189.4 232,189.4 233,189.4 234,189.4 235,189.4 236,189.4 237,189.4 238,189.4 239,189.4 240,190.4 241,190.4 242,186.6 243,185.6 244,183.6 245,181.6 246,179.7 247,177.8 248,175.9 249,174.0 250,172.2 251,170.4 252,168.7 253,166.9 254,165.3 255,163.6 256,162.0 257,160.5 258,158.0 259,157.6 260,156.2 261,154.9 262,153.7 263,152.5 264,150.4 265,150.3 266,149.3 267,148.4 268,148.6 269,146.8 270,146.1 271,146.5 272,144.9 273,144.5 274,143.1 275,143.8 276,143.6 277,143.4 278,144.4 279,143.4 280,144.4 281,143.4 282,143.4 283,143.4 284,143.4 285,143.4 286,143.4 287,143.4 288,144.4 289,143.4 290,144.4 291,142.4 292,143.4 293,143.4 294,142.4 295,144.4 296,143.7 297,145.0 298,146.4 299,147.8 300,149.3 301,150.9 302,152.5 303,154.1 304,155.8 305,157.6 306,159.3 307,161.1 308,163.0 309,164.9 310,166.8 311,167.7 312,170.6 313,172.6 314,174.6 315,176.6 316,179.5 317,180.5 318,182.6 319,185.6 320,186.5 321,188.5 322,191.5 323,192.5 324,194.4 325,196.3 326,198.2 327,200.1 328,202.0 329,204.8 330,206.6 331,207.3 332,209.0 333,209.6 334,212.3 335,213.8 336,215.3 337,216.8 338,218.2 339,219.5 340,220.8 341,222.0 342,223.2 343,224.2 344,226.2 345,226.2 346,227.1 347,227.9 348,227.6 349,229.2 350,228.8 351,229.3 352,230.7 353,231.1 354,232.3 355,231.5 356,231.6 357,231.6 358,231.6 359,231.6 360,230.6 361,231.6 362,231.6 363,231.6 364,231.6 365,230.6 366,232.6 367,231.6 368,230.6 369,231.6 370,231.6 371,230.6 372,231.6 373,231.6 374,231.6 375,230.6 376,229.2 377,228.8 378,226.4 379,224.8 380,223.2 381,221.6 382,219.9 383,218.2 384,216.5 385,214.7 386,211.8 387,212.0 388,209.1 389,207.2 390,205.2 391,203.3 392,201.3 393,199.3 394,196.4 395,195.4 396,193.3 397,191.3 398,189.3 399,187.4 400,185.4 401,182.4 402,182.5 403,179.5 404,177.6 405,175.7 406,174.9 407,172.0 408,170.2 409,168.5 410,166.8 411,165.1 412,163.5 413,162.9 414,160.3 415,157.9 416,157.5 417,156.1 418,154.8 419,153.5 420,152.4 421,151.2 422,150.2 423,148.2 424,148.3 425,147.5 426,146.7 427,146.0 428,144.4 429,144.9 430,144.4 431,143.1 432,143.8 433,143.5 434,143.4 435,143.4 436,144.4 437,143.4 438,143.4 439,144.4 440,143.4 441,143.4 442,143.4 443,143.4 444,143.4 445,143.4 446,144.4 447,144.4 448,144.4 449,144.4 450,144.4 451,143.4 452,143.4 453,144.8 454,145.1 455,146.5 456,148.0 457,149.5 458,151.0 459,152.7 460,154.3 461,155.0 462,157.7 463,160.5 464,161.3 465,163.2 466,165.1 467,168.0 468,167.9 469,170.8 470,172.8 471,174.8 472,176.8 473,178.7 474,180.7 475,182.8 476,184.8 477,186.7 478,188.7 479,190.7 480,192.7 481,194.6 482,195.5 483,198.4 484,200.3 485,203.2 486,204.0 487,205.7 488,207.5 489,209.2 490,210.8 491,212.4 492,214.0 493,215.5 494,216.9 495,219.3 496,219.6 497,220.9 498,222.1 499,223.3 500,224.3 501,225.3 502,226.3 503,228.2 504,227.9 505,229.7 506,228.3 507,229.9 508,231.4 509,231.8 510,232.1 511,231.4 512,230.5 513,232.6 514,231.6 515,232.6 516,231.6 517,231.6 518,231.6 519,231.6 520,231.6 521,231.6 522,232.6 523,231.6 524,231.6 525,231.6 526,232.6 527,231.6 528,231.6 529,232.6 530,231.6 531,231.6 532,230.5 533,228.1 534,226.7 535,225.2 536,224.7 537,223.1 538,221.4 539,219.8 540,218.0 541,216.3 542,214.5 543,213.7 544,210.8 545,208.9 546,207.0 547,205.1 548,202.1 549,201.1 550,199.1 551,197.2 552,195.2 553,193.1 554,191.1 555,189.2 556,186.2 557,186.2 558,183.2 559,181.3 560,179.3 561,177.4 562,175.5 563,172.7 564,171.8 565,169.1 566,168.3 567,166.6 568,163.9 569,163.3 570,161.7 571,160.2 572,158.7 573,157.3 574,156.0 575,154.7 576,153.4 577,151.2 578,152.1 579,150.1 580,149.1 581,147.2 582,147.4 583,146.7 584,146.0 585,144.4 586,144.8 587,144.4 588,144.0 589,143.7 590,143.5 591,143.4 592,143.4 593,143.4 594,143.4 595,143.4 596,143.4 597,143.4 598,143.4 599,143.4 600,142.4 601,142.4 602,143.4 603,143.4 604,143.4 605,143.4 606,142.4 607,142.4 608,142.4 609,142.4 610,143.9 611,145.3 612,146.7 613,147.1 614,149.6 615,151.2 616,152.8 617,154.5 618,157.2 619,158.9 620,159.7 621,161.5 622,163.4 623,165.2 624,167.1 625,170.1 626,171.0 627,173.0 628,175.0 629,176.0 630,178.9 631,180.9 632,183.0 633,185.0 634,187.9 635,188.9 636,190.9 637,193.9 638,194.8 639,196.7 640,199.6 641,200.5 642,202.3 643,204.1 644,205.9 645,207.6 646,209.3 647,211.0 648,212.6 649,214.1 650,215.6 651,217.1 652,218.4 653,219.8 654,222.0 655,222.2 656,223.4 657,224.4 658,225.4 659,226.4 660,226.2 661,228.0 662,228.7 663,228.4 664,229.9 665,230.4 666,231.8 667,231.1 668,230.4 669,231.6 670,231.6 671,231.6 672,231.6 673,231.6 674,231.6 675,231.6 676,230.6 677,232.6 678,231.6 679,231.6 680,231.6 681,231.6 682,231.6 683,231.6 684,231.6 685,231.6 686,232.6 687,231.6 688,230.6 689,230.3 690,229.0 691,227.5 692,226.0 693,224.5 694,222.9 695,221.3 696,219.6 697,218.9 698,216.1 699,215.3 700,213.5 701,210.6 702,208.7 703,205.8 704,203.9 705,202.9 706,200.9 707,198.9 708,197.0 709,195.0 710,191.9 711,190.9 712,188.0 713,187.0 714,185.0 715,182.0 716,180.1 717,179.1 718,178.2 719,175.3 720,173.5 721,171.7 722,169.9 723,168.1 724,166.4 725,164.8 726,163.1 727,161.6 728,160.1 729,158.6 730,157.2 731,155.8 732,154.5 733,154.3 734,152.1 735,151.0 736,150.0 737,149.0 738,148.1 739,146.3 740,146.6 741,146.9 742,145.3 743,144.8 744,144.4 745,144.0 746,143.7 747,143.5 748,144.4 749,143.4 750,143.4 751,144.4 752,143.4 753,142.4 754,144.4 755,143.4 756,143.4 757,143.4 758,143.4 759,143.4 760,144.4 761,143.4 762,143.4 763,143.4 764,143.4 765,143.4 766,143.4 767,144.1 768,145.4 769,146.8 770,148.3 771,149.8 772,151.4 773,154.0 774,155.6 775,157.3 776,157.1 777,158.9 778,161.7 779,163.5 780,165.4 781,167.3 782,169.3 783,171.2 784,173.2 785,175.2 786,177.2 787,178.1 788,181.1 789,183.2 790,185.2 791,187.1 792,189.1 793,191.1 794,192.1 795,196.0 796,195.9 797,198.8 798,199.7 799,202.5 800,203.3 801,205.1 802,206.8 803,209.5 804,210.1 805,213.7 806,215.3 807,214.8 808,217.2 809,219.6 810,220.9 811,221.2 812,222.4 813,223.5 814,225.5 815,225.5 816,226.5 817,228.3 818,228.1 819,227.8 820,230.4 821,230.0 822,229.5 823,230.8 824,231.2 825,232.4 826,232.6 827,231.6 828,231.6 829,231.6 830,231.6 831,231.6 832,231.6 833,230.6 834,231.6 835,231.6 836,231.6 837,231.6 838,232.6 839,231.6 840,231.6 841,231.6 842,232.6 843,232.6 844,232.6 845,230.5 846,231.2 847,229.8 848,227.4 849,225.9 850,223.4 851,222.8 852,221.1 853,219.4 854,217.7 855,215.9 856,215.1 857,212.3 858,210.4 859,208.5 860,207.6 861,204.7 862,202.7 863,201.7 864,200.4 865,200.4 866,200.4 867,200.4 868,200.4 869,200.4 870,200.4 871,200.4 872,200.4 873,200.4 874,200.4 875,200.4 876,200.4 877,200.4 878,200.4 879,200.4 880,200.4 881,200.4 882,200.4 883,200.4 884,200.4 885,200.4 886,200.4 887,200.4 888,200.4 889,200.4 890,200.4 891,200.4 892,200.4 893,200.4 894,200.4 895,200.4 896,200.4 896,200.4"/><polyline shape-rendering="crispEdges" fill="none" stroke="#0000ff" stroke-width="1" points="203.0,187.4 235.7,187.4 237.0,185.9 238.0,183.9 239.0,181.9 240.0,179.9 241.0,177.9 242.0,176.0 243.0,174.1 244.0,172.1 245.0,170.2 246.0,168.4 247.0,166.5 248.0,164.7 249.0,163.0 250.0,161.3 251.0,159.6 252.0,157.9 253.0,156.3 254.0,154.8 255.0,153.3 256.0,151.9 257.0,150.5 258.0,149.2 259.0,147.9 260.0,146.7 261.0,145.6 262.0,144.6 263.0,143.6 264.0,142.6 265.0,141.8 266.0,141.0 267.0,140.3 268.0,139.7 269.0,139.1 270.0,138.7 271.0,138.3 272.0,138.0 273.0,137.7 274.0,137.6 275.0,137.5 276.0,137.5 277.0,137.6 278.0,137.8 279.0,138.0 280.0,138.3 281.0,138.7 282.0,139.2 283.0,139.8 284.0,140.4 285.0,141.1 286.0,141.9 287.0,142.8 288.0,143.7 289.0,144.7 290.0,145.8 291.0,146.9 292.0,148.1 293.0,149.4 294.0,150.7 295.0,152.1 296.0,153.5 297.0,155.0 298.0,156.6 299.0,158.2 300.0,159.8 301.0,161.5 302.0,163.2 303.0,165.0 304.0,166.8 305.0,168.7 306.0,170.5 307.0,172.4 308.0,174.3 309.0,176.3 310.0,178.2 311.0,180.2 312.0,182.2 313.0,184.2 314.0,186.2 315.0,188.2 316.0,190.2 317.0,192.2 318.0,194.2 319.0,196.2 320.0,198.1 321.0,200.1 322.0,202.0 323.0,203.9 324.0,205.8 325.0,207.6 326.0,209.5 327.0,211.2 328.0,213.0 329.0,214.7 330.0,216.3 331.0,217.9 332.0,219.5 333.0,221.0 334.0,222.5 335.0,223.9 336.0,225.2 337.0,226.5 338.0,227.7 339.0,228.9 340.0,230.0 341.0,231.0 342.0,232.0 343.0,232.8 344.0,233.6 345.0,234.4 346.0,235.0 347.0,235.6 348.0,236.1 349.0,236.6 350.0,236.9 351.0,237.2 352.0,237.4 353.0,237.5 354.0,237.5 355.0,237.4 356.0,237.3 357.0,237.1 358.0,236.8 359.0,236.5 360.0,236.0 361.0,235.5 362.0,234.9 363.0,234.2 364.0,233.4 365.0,232.6 366.0,231.7 367.0,230.8 368.0,229.7 369.0,228.6 370.0,227.4 371.0,226.2 372.0,224.9 373.0,223.5 374.0,222.1 375.0,220.7 376.0,219.1 377.0,217.5 378.0,215.9 379.0,214.3 380.0,212.5 381.0,210.8 382.0,209.0 383.0,207.2 384.0,205.3 385.0,203.4 386.0,201.5 387.0,199.6 388.0,197.6 389.0,195.7 390.0,193.7 391.0,191.7 392.0,189.7 393.0,187.7 394.0,185.7 395.0,183.7 396.0,181.7 397.0,179.7 398.0,177.8 399.0,175.8 400.0,173.9 401.0,171.9 402.0,170.1 403.0,168.2 404.0,166.4 405.0,164.6 406.0,162.8 407.0,161.1 408.0,159.4 409.0,157.8 410.0,156.2 411.0,154.7 412.0,153.2 413.0,151.7 414.0,150.4 415.0,149.1 416.0,147.8 417.0,146.6 418.0,145.5 419.0,144.5 420.0,143.5 421.0,142.6 422.0,141.7 423.0,140.9 424.0,140.3 425.0,139.6 426.0,139.1 427.0,138.6 428.0,138.2 429.0,137.9 430.0,137.7 431.0,137.6 432.0,137.5 433.0,137.5 434.0,137.6 435.0,137.8 436.0,138.0 437.0,138.4 438.0,138.8 439.0,139.3 440.0,139.8 441.0,140.5 442.0,141.2 443.0,142.0 444.0,142.9 445.0,143.8 446.0,144.8 447.0,145.9 448.0,147.0 449.0,148.2 450.0,149.5 451.0,150.8 452.0,152.2 453.0,153.7 454.0,155.2 455.0,156.7 456.0,158.3 457.0,160.0 458.0,161.7 459.0,163.4 460.0,165.2 461.0,167.0 462.0,168.8 463.0,170.7 464.0,172.6 465.0,174.5 466.0,176.5 467.0,178.4 468.0,180.4 469.0,182.4 470.0,184.4 471.0,186.4 472.0,188.4 473.0,190.4 474.0,192.4 475.0,194.4 476.0,196.4 477.0,198.3 478.0,200.3 479.0,202.2 480.0,204.1 481.0,206.0 482.0,207.8 483.0,209.6 484.0,211.4 485.0,213.1 486.0,214.8 487.0,216.5 488.0,218.1 489.0,219.7 490.0,221.2 491.0,222.6 492.0,224.0 493.0,225.4 494.0,226.6 495.0,227.9 496.0,229.0 497.0,230.1 498.0,231.1 499.0,232.0 500.0,232.9 501.0,233.7 502.0,234.4 503.0,235.1 504.0,235.7 505.0,236.2 506.0,236.6 507.0,236.9 508.0,237.2 509.0,237.4 510.0,237.5 511.0,237.5 512.0,237.4 513.0,237.3 514.0,237.1 515.0,236.8 516.0,236.4 517.0,236.0 518.0,235.4 519.0,234.8 520.0,234.1 521.0,233.4 522.0,232.5 523.0,231.6 524.0,230.7 525.0,229.6 526.0,228.5 527.0,227.3 528.0,226.1 529.0,224.8 530.0,223.4 531.0,222.0 532.0,220.5 533.0,219.0 534.0,217.4 535.0,215.8 536.0,214.1 537.0,212.4 538.0,210.6 539.0,208.8 540.0,207.0 541.0,205.1 542.0,203.2 543.0,201.3 544.0,199.4 545.0,197.4 546.0,195.5 547.0,193.5 548.0,191.5 549.0,189.5 550.0,187.5 551.0,185.5 552.0,183.5 553.0,181.5 554.0,179.5 555.0,177.6 556.0,175.6 557.0,173.7 558.0,171.8 559.0,169.9 560.0,168.0 561.0,166.2 562.0,164.4 563.0,162.6 564.0,160.9 565.0,159.2 566.0,157.6 567.0,156.0 568.0,154.5 569.0,153.0 570.0,151.6 571.0,150.2 572.0,148.9 573.0,147.7 574.0,146.5 575.0,145.4 576.0,144.3 577.0,143.4 578.0,142.5 579.0,141.6 580.0,140.9 581.0,140.2 582.0,139.6 583.0,139.0 584.0,138.6 585.0,138.2 586.0,137.9 587.0,137.7 588.0,137.6 589.0,137.5 590.0,137.5 591.0,137.6 592.0,137.8 593.0,138.1 594.0,138.4 595.0,138.8 596.0,139.3 597.0,139.9 598.0,140.6 599.0,141.3 600.0,142.1 601.0,143.0 602.0,143.9 603.0,144.9 604.0,146.0 605.0,147.1 606.0,148.4 607.0,149.6 608.0,151.0 609.0,152.4 610.0,153.8 611.0,155.3 612.0,156.9 613.0,158.5 614.0,160.2 615.0,161.9 616.0,163.6 617.0,165.4 618.0,167.2 619.0,169.0 620.0,170.9 621.0,172.8 622.0,174.7 623.0,176.7 624.0,178.6 625.0,180.6 626.0,182.6 627.0,184.6 628.0,186.6 629.0,188.6 630.0,190.6 631.0,192.6 632.0,194.6 633.0,196.6 634.0,198.5 635.0,200.5 636.0,202.4 637.0,204.3 638.0,206.2 639.0,208.0 640.0,209.8 641.0,211.6 642.0,213.3 643.0,215.0 644.0,216.7 645.0,218.3 646.0,219.8 647.0,221.3 648.0,222.8 649.0,224.2 650.0,225.5 651.0,226.8 652.0,228.0 653.0,229.1 654.0,230.2 655.0,231.2 656.0,232.1 657.0,233.0 658.0,233.8 659.0,234.5 660.0,235.2 661.0,235.7 662.0,236.2 663.0,236.6 664.0,237.0 665.0,237.2 666.0,237.4 667.0,237.5 668.0,237.5 669.0,237.4 670.0,237.3 671.0,237.1 672.0,236.8 673.0,236.4 674.0,235.9 675.0,235.4 676.0,234.7 677.0,234.1 678.0,233.3 679.0,232.4 680.0,231.5 681.0,230.5 682.0,229.5 683.0,228.4 684.0,227.2 685.0,225.9 686.0,224.6 687.0,223.3 688.0,221.8 689.0,220.3 690.0,218.8 691.0,217.2 692.0,215.6 693.0,213.9 694.0,212.2 695.0,210.4 696.0,208.6 697.0,206.8 698.0,204.9 699.0,203.1 700.0,201.1 701.0,199.2 702.0,197.2 703.0,195.3 704.0,193.3 705.0,191.3 706.0,189.3 707.0,187.3 708.0,185.3 709.0,183.3 710.0,181.3 711.0,179.3 712.0,177.4 713.0,175.4 714.0,173.5 715.0,171.6 716.0,169.7 717.0,167.8 718.0,166.0 719.0,164.2 720.0,162.5 721.0,160.7 722.0,159.1 723.0,157.5 724.0,155.9 725.0,154.3 726.0,152.9 727.0,151.5 728.0,150.1 729.0,148.8 730.0,147.6 731.0,146.4 732.0,145.3 733.0,144.2 734.0,143.3 735.0,142.4 736.0,141.6 737.0,140.8 738.0,140.1 739.0,139.5 740.0,139.0 741.0,138.5 742.0,138.2 743.0,137.9 744.0,137.7 745.0,137.6 746.0,137.5 747.0,137.5 748.0,137.6 749.0,137.8 750.0,138.1 751.0,138.4 752.0,138.9 753.0,139.4 754.0,140.0 755.0,140.6 756.0,141.4 757.0,142.2 758.0,143.0 759.0,144.0 760.0,145.0 761.0,146.1 762.0,147.3 763.0,148.5 764.0,149.8 765.0,151.1 766.0,152.5 767.0,154.0 768.0,155.5 769.0,157.1 770.0,158.7 771.0,160.3 772.0,162.0 773.0,163.8 774.0,165.5 775.0,167.4 776.0,169.2 777.0,171.1 778.0,173.0 779.0,174.9 780.0,176.9 781.0,178.8 782.0,180.8 783.0,182.8 784.0,184.8 785.0,186.8 786.0,188.8 787.0,190.8 788.0,192.8 789.0,194.8 790.0,196.8 791.0,198.7 792.0,200.7 793.0,202.6 794.0,204.5 795.0,206.3 796.0,208.2 797.0,210.0 798.0,211.8 799.0,213.5 800.0,215.2 801.0,216.8 802.0,218.4 803.0,220.0 804.0,221.5 805.0,222.9 806.0,224.3 807.0,225.6 808.0,226.9 809.0,228.1 810.0,229.2 811.0,230.3 812.0,231.3 813.0,232.2 814.0,233.1 815.0,233.9 816.0,234.6 817.0,235.2 818.0,235.8 819.0,236.3 820.0,236.7 821.0,237.0 822.0,237.2 823.0,237.4 824.0,237.5 825.0,237.5 826.0,237.4 827.0,237.3 828.0,237.0 829.0,236.7 830.0,236.3 831.0,235.9 832.0,235.3 833.0,234.7 834.0,234.0 835.0,233.2 836.0,232.4 837.0,231.4 838.0,230.4 839.0,229.4 840.0,228.3 841.0,227.1 842.0,225.8 843.0,224.5 844.0,223.1 845.0,221.7 846.0,220.2 847.0,218.7 848.0,217.1 849.0,215.4 850.0,213.7 851.0,212.0 852.0,210.3 853.0,208.5 854.0,206.6 855.0,204.8 856.0,202.9 857.0,200.9 858.0,199.0 859.0,197.1 860.0,195.1 861.0,193.1 862.0,191.1 862.6,190.4 896.0,190.4"/></svg>
</body></html>
